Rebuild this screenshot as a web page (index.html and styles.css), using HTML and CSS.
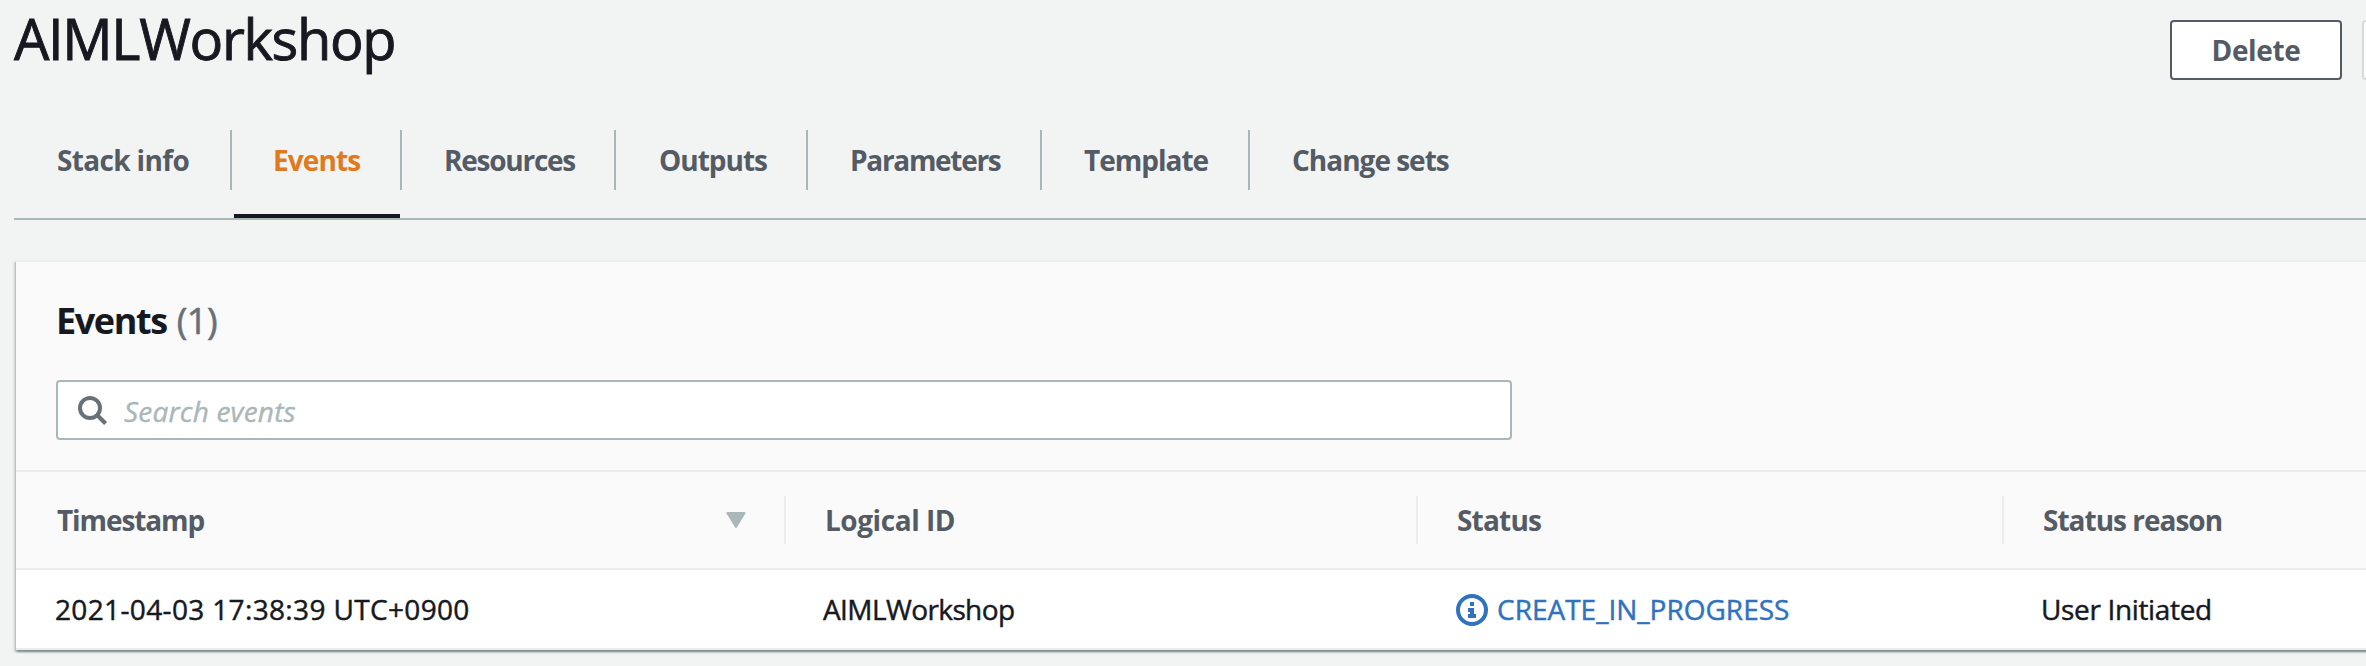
FILE: index.html
```
<!DOCTYPE html>
<html lang="en">
<head>
<meta charset="utf-8">
<title>AIMLWorkshop</title>
<link rel="stylesheet" href="styles.css">
</head>
<body>
<div class="page">
  <header class="header">
    <h1 class="title">AIMLWorkshop</h1>
    <div class="actions">
      <button class="btn delete" type="button">Delete</button>
      <button class="btn disabled" type="button" disabled aria-label="Update"></button>
    </div>
  </header>
  <nav class="tabs">
    <a class="tab tab-info"><span>Stack info</span></a>
    <a class="tab tab-events active"><span>Events</span></a>
    <a class="tab tab-resources"><span>Resources</span></a>
    <a class="tab tab-outputs"><span>Outputs</span></a>
    <a class="tab tab-parameters"><span>Parameters</span></a>
    <a class="tab tab-template"><span>Template</span></a>
    <a class="tab tab-changes"><span>Change sets</span></a>
  </nav>
  <section class="card">
    <div class="card-head">
      <h2 class="card-title">Events <span class="count">(1)</span></h2>
      <div class="search">
        <svg class="search-icon" width="32" height="32" viewBox="0 0 32 32"><circle cx="14" cy="14" r="10" fill="none" stroke="#687078" stroke-width="4"/><path d="M21 21L29.6 29.4" fill="none" stroke="#687078" stroke-width="4.2"/></svg>
        <span class="placeholder">Search events</span>
      </div>
    </div>
    <div class="row head">
      <div class="cell"><span class="h-time">Timestamp</span><svg class="sort" width="20" height="16" viewBox="0 0 20 16"><path d="M1.4 1H18.6L10 15Z" fill="#aab7b8" stroke="#aab7b8" stroke-width="2" stroke-linejoin="round"/></svg></div>
      <div class="cell"><span class="h-logical">Logical ID</span></div>
      <div class="cell"><span class="h-status">Status</span></div>
      <div class="cell"><span class="h-reason">Status reason</span></div>
    </div>
    <div class="row body">
      <div class="cell"><span class="v-time">2021-04-03 17:38:39 UTC+0900</span></div>
      <div class="cell"><span class="v-logical">AIMLWorkshop</span></div>
      <div class="cell status"><svg width="32" height="32" viewBox="0 0 32 32"><circle cx="16" cy="16" r="14" fill="none" stroke="#2f72c0" stroke-width="4"/><path d="M14 8h4v4h-4zM12 14h6v6h2v4h-8v-4h2v-2h-2z" fill="#2f72c0"/></svg><span class="v-status">CREATE_IN_PROGRESS</span></div>
      <div class="cell"><span class="v-reason">User Initiated</span></div>
    </div>
  </section>
</div>
</body>
</html>
```
FILE: styles.css
```
* { box-sizing: border-box; }
body {
  margin: 0;
  height: 666px;
  overflow: hidden;
  background: #f2f4f4;
  color: #16191f;
  font: 28px/40px "Open Sans", "Noto Sans", sans-serif;
  white-space: nowrap;
}
.page { padding-left: 14px; }
.header { display: flex; justify-content: space-between; height: 130px; }
.title { margin: 0; font-size: 56px; font-weight: 400; line-height: 77px; letter-spacing: -1.35px; -webkit-text-stroke: .9px currentColor; }
.actions { display: flex; gap: 20px; padding-top: 20px; height: 80px; margin-right: -24px; }
.btn {
  width: 172px; height: 60px; padding: 0;
  border: 2px solid #545b64; border-radius: 4px;
  background: #fff; color: #545b64;
  font: 700 28px/56px "Open Sans", sans-serif;
}
.delete { letter-spacing: -.35px; }
.disabled { width: 28px; border-color: #d5dbdb; }

.tabs { display: flex; height: 90px; border-bottom: 2px solid #aab7b8; }
.tab {
  position: relative; height: 60px; padding-left: 42px;
  border-right: 2px solid #aab7b8;
  color: #545b64; font-weight: 700; line-height: 61px;
}
.tab-info { width: 218px; padding-left: 43px; letter-spacing: -.65px; }
.tab-events { width: 170px; padding-left: 41px; letter-spacing: -.9px; }
.tab-resources { width: 214px; letter-spacing: -1.25px; }
.tab-outputs { width: 192px; padding-left: 43px; letter-spacing: -1px; }
.tab-parameters { width: 234px; letter-spacing: -1.3px; }
.tab-template { width: 208px; padding-left: 42px; letter-spacing: -1px; }
.tab-changes { width: 240px; border-right: 0; letter-spacing: -1px; }
.active { color: #e07a1c; }
.active::after {
  content: ""; position: absolute; left: 2px; right: 0; bottom: -28px;
  height: 4px; background: #16191f;
}

.card {
  margin: 40px -20px 0 2px;
  border-top: 2px solid #eaeded;
  background: #fff;
  box-shadow: 0 2px 2px 0 rgba(0,28,36,.3), 2px 2px 2px 0 rgba(0,28,36,.15), -2px 2px 2px 0 rgba(0,28,36,.15);
}
.card-head { height: 208px; padding: 32px 0 0 40px; background: #fafafa; }
.card-title { margin: 0; height: 54px; font-size: 36px; line-height: 54px; font-weight: 700; letter-spacing: -1.4px; }
.count { margin-left: 2px; color: #687078; font-weight: 400; letter-spacing: -.4px; -webkit-text-stroke: .6px currentColor; }
.search {
  display: flex; align-items: center; gap: 16px;
  width: 1456px; height: 60px; margin-top: 32px; padding-left: 18px;
  border: 2px solid #aab7b8; border-radius: 4px; background: #fff;
}
.placeholder { padding-top: 2px; color: #aab7b8; font-style: italic; letter-spacing: .2px; -webkit-text-stroke: .4px currentColor; }
.row { display: grid; grid-template-columns: 770px 632px 586px 1fr; }
.head {
  height: 100px; padding: 24px 0;
  border-top: 2px solid #eaeded; border-bottom: 2px solid #eaeded;
  background: #fafafa; color: #545b64; font-weight: 700;
}
.head .cell { display: flex; align-items: center; justify-content: space-between; padding: 0 38px 0 39px; border-right: 2px solid #eaeded; }
.head .cell:first-child { padding-left: 41px; }
.head .cell:last-child { border-right: 0; }
.h-time { letter-spacing: -1.1px; }
.h-logical { letter-spacing: -.45px; }
.h-status { letter-spacing: -.8px; }
.h-reason { letter-spacing: -1px; }
.body { height: 80px; border-bottom: 2px solid #eaeded; -webkit-text-stroke: .45px currentColor; }
.body .cell { padding: 19px 0 0 37px; }
.body .cell:first-child { padding-left: 39px; }
.v-time { letter-spacing: .35px; }
.v-logical { letter-spacing: -.6px; }
.v-reason { letter-spacing: -.35px; }
.body .status { display: flex; gap: 9px; padding-left: 38px; color: #2f72c0; }
.status svg { margin-top: 5px; -webkit-text-stroke: 0; }
```
